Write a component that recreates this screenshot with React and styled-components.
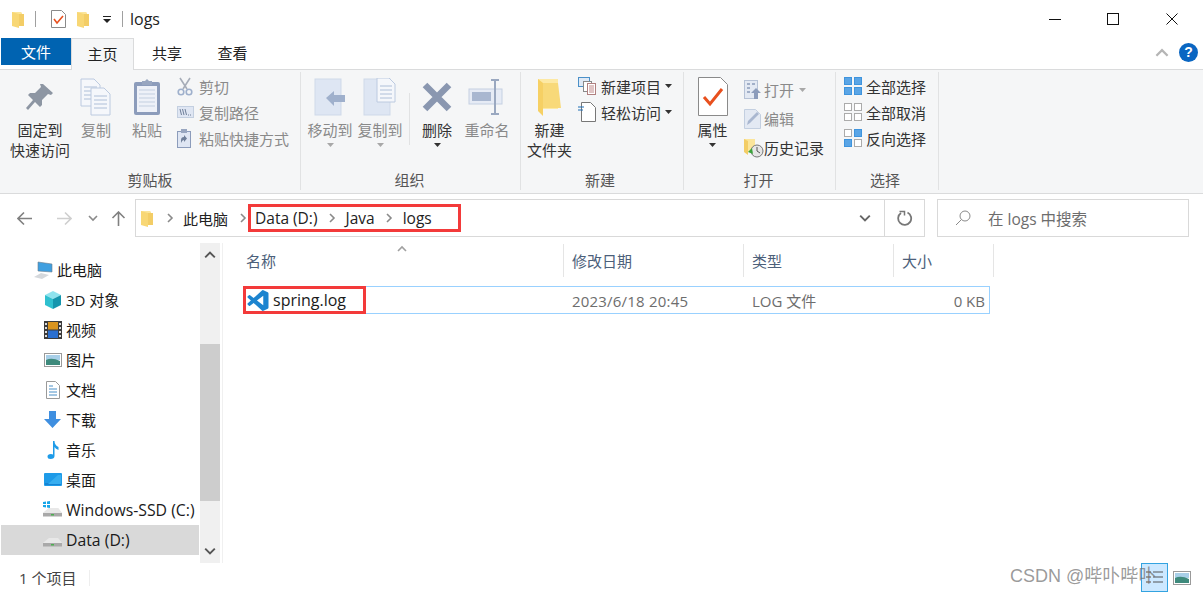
import React from "react";
import styled, { createGlobalStyle } from "styled-components";

const GlobalStyle = createGlobalStyle`
  html, body { margin: 0; padding: 0; background: #fff; }
  * { box-sizing: border-box; }
  body {
    font-family: "Open Sans", "Noto Sans CJK SC", sans-serif;
    font-size: 15px;
    color: #1a1a1a;
  }
`;

/* ---------- icons ---------- */
const Folder = ({ w = 13, h = 17 }) => (
  <svg width={w} height={h} viewBox="0 0 13 17">
    <path d="M0 1h9l1 1v13H0z" fill="#fbe59b" />
    <path d="M0 1l7 2v14l-7-2z" fill="#f8d775" />
    <path d="M7 3h5v12H7z" fill="#f3cd66" />
  </svg>
);
const BigFolder = () => (
  <svg width="26" height="38" viewBox="0 0 26 38">
    <path d="M1 1h20v30H1z" fill="#fde9a4" />
    <path d="M1 1l5 4v33l-5-5z" fill="#f6d064" />
    <path d="M6 5h15l3 25H6z" fill="#f8d979" />
  </svg>
);
const Pin = () => (
  <svg width="28" height="28" viewBox="0 0 28 28">
    <path d="M17 1l10 9-2 2-3-1-6 6 0 5-2 2-5-5-7 8-2-2 7-8-5-5 2-2h5l6-6-1-3z" fill="#8d96a3" />
  </svg>
);
const Sheet = ({ x, y, w = 19, h = 27 }) => (
  <g>
    <path d={`M${x} ${y}h${w - 6}l6 6v${h - 6}h-${w}z`} fill="#f5f7fb" stroke="#bccae0" />
    {[8, 12, 16, 20].map((d) => (
      <path key={d} d={`M${x + 3} ${y + d}h${w - 6}`} stroke="#aebfd8" />
    ))}
  </g>
);
const CopyIcon = () => (
  <svg width="32" height="38" viewBox="0 0 32 38">
    <Sheet x={1} y={1} />
    <Sheet x={11} y={10} />
  </svg>
);
const PasteIcon = () => (
  <svg width="28" height="38" viewBox="0 0 28 38">
    <rect x="1" y="4" width="26" height="33" rx="2" fill="#8c9cbb" />
    <rect x="4" y="8" width="20" height="26" fill="#eef1f8" />
    {[12, 16, 20, 24, 28].map((d) => (
      <path key={d} d={`M6 ${d}h16`} stroke="#c3cfe0" />
    ))}
    <path d="M9 3h3l2-2 2 2h3v4H9z" fill="#98a6c0" />
  </svg>
);
const Cut = () => (
  <svg width="16" height="19" viewBox="0 0 16 19">
    <path d="M3 1l7 11M13 1L6 12" stroke="#a7adb8" strokeWidth="1.6" fill="none" />
    <circle cx="4" cy="15" r="2.8" fill="none" stroke="#9fb0cc" strokeWidth="1.6" />
    <circle cx="12" cy="15" r="2.8" fill="none" stroke="#9fb0cc" strokeWidth="1.6" />
  </svg>
);
const PathIcon = () => (
  <svg width="17" height="12" viewBox="0 0 17 12">
    <rect x=".5" y=".5" width="16" height="11" fill="#dfe6f3" stroke="#c3cfe0" />
    <path d="M3 3l1.5 6M5.5 3L7 9M8 3l1.5 6" stroke="#6f7f99" />
    <path d="M11 9h1M13 9h1" stroke="#6f7f99" />
  </svg>
);
const ShortcutIcon = () => (
  <svg width="14" height="19" viewBox="0 0 14 19">
    <rect x=".5" y="2.5" width="13" height="16" fill="#dfe6f3" stroke="#8c9cbb" />
    <rect x="4" y="0" width="6" height="4" fill="#98a6c0" />
    <path d="M4 14v-3q0-3 3-3V6l3 3.5L7 13v-2q-2 0-3 3z" fill="#6f7f99" />
  </svg>
);
const MoveIcon = () => (
  <svg width="32" height="38" viewBox="0 0 32 38">
    <rect x="1" y="1" width="26" height="36" fill="#dee6f3" stroke="#cfd9e9" />
    <path d="M12 27l8-7v4h11v7H20v4z" fill="#9fb0cc" transform="translate(0 -7)" />
  </svg>
);
const CopyToIcon = () => (
  <svg width="34" height="38" viewBox="0 0 34 38">
    <rect x="1" y="1" width="26" height="36" fill="#dee6f3" stroke="#cfd9e9" />
    <Sheet x={14} y={0} w={18} h={24} />
  </svg>
);
const BigX = () => (
  <svg width="32" height="32" viewBox="0 0 32 32">
    <path d="M4 4l24 24M28 4L4 28" stroke="#8a97b0" strokeWidth="6.5" />
  </svg>
);
const RenameIcon = () => (
  <svg width="38" height="36" viewBox="0 0 38 36">
    <rect x="1" y="10" width="33" height="15" fill="#e6ebf5" stroke="#c5d0e2" />
    <rect x="4" y="13" width="19" height="9" fill="#a9b7d0" />
    <path d="M23 1h8M23 35h8M27 1v34" stroke="#9aa8c0" strokeWidth="2" fill="none" />
  </svg>
);
const NewItemIcon = () => (
  <svg width="19" height="18" viewBox="0 0 19 18">
    <rect x=".5" y=".5" width="11" height="9" fill="#dfe9f5" stroke="#4a90c8" />
    <rect x="5.5" y="4.5" width="8" height="10" fill="#fff" stroke="#8a8a8a" />
    <rect x="9.5" y="6.5" width="8" height="11" fill="#fff" stroke="#b08080" />
    <path d="M11 9h5M11 11h5M11 13h5M11 15h5" stroke="#c08a8a" />
  </svg>
);
const EasyIcon = () => (
  <svg width="18" height="20" viewBox="0 0 18 20">
    <path d="M3.5.5h9l5 5v14h-14z" fill="#fff" stroke="#777" />
    <path d="M0 5h6M0 8h5" stroke="#1f6fb5" strokeWidth="1.2" />
  </svg>
);
const PropsIcon = () => (
  <svg width="30" height="39" viewBox="0 0 30 39">
    <path d="M.5.5h22l7 7v31H.5z" fill="#fff" stroke="#8a8a8a" />
    <path d="M6 20l6 7 12-15" stroke="#e8501e" strokeWidth="3" fill="none" />
  </svg>
);
const OpenIcon = () => (
  <svg width="18" height="20" viewBox="0 0 18 20">
    <rect x=".5" y=".5" width="13" height="18" fill="#e3e9f3" stroke="#b6c2d6" />
    <path d="M3 4h3M8 4h3M3 8h3M3 12h3" stroke="#8c9cbb" strokeWidth="1.5" />
    <path d="M12 8l5 5h-3v6h-4v-6H7z" fill="#8c9cbb" />
  </svg>
);
const EditIcon = () => (
  <svg width="17" height="20" viewBox="0 0 17 20">
    <path d="M.5.5h11l5 5v14H.5z" fill="#e3e9f3" stroke="#c3cfe0" />
    <path d="M3 16l1-4 9-9 2 2-9 9z" fill="#a9b7d0" />
  </svg>
);
const HistoryIcon = () => (
  <svg width="20" height="20" viewBox="0 0 20 20">
    <path d="M0 1h11v13H0z" fill="#fbe59b" />
    <path d="M0 1l4 2v14l-4-3z" fill="#f3cd66" />
    <circle cx="13" cy="13" r="6" fill="#e6e6e6" stroke="#777" />
    <path d="M13 9v4l3 2" stroke="#555" fill="none" />
    <path d="M4 14l4-4 1 6z" fill="#3ca33c" />
  </svg>
);
const SelectGrid = ({ on = [0, 1, 2, 3] }) => (
  <svg width="18" height="18" viewBox="0 0 18 18">
    {[[0, 0], [10, 0], [0, 10], [10, 10]].map(([x, y], i) => (
      <rect
        key={i}
        x={x + 0.5}
        y={y + 0.5}
        width="7"
        height="7"
        fill={on.includes(i) ? "#5aa5e6" : "#fff"}
        stroke={on.includes(i) ? "#3f94dd" : "#ababab"}
      />
    ))}
  </svg>
);
const Caret = ({ light }) => (
  <svg width="7" height="4" viewBox="0 0 7 4">
    <path d="M0 0h7L3.5 4z" fill={light ? "#a8a8a8" : "#333"} />
  </svg>
);
const Chevron = ({ dir = "right", color = "#8a8a8a", size = 10 }) => {
  const d = {
    right: "M3 1l4 4-4 4",
    down: "M1 3l4 4 4-4",
    up: "M1 7l4-4 4 4",
  }[dir];
  return (
    <svg width={size} height={size} viewBox="0 0 10 10">
      <path d={d} fill="none" stroke={color} strokeWidth="1.6" />
    </svg>
  );
};
const Arrow = ({ dir, color }) => {
  const d = {
    left: "M15 7.5H1M7 1.5l-6 6 6 6",
    right: "M0 7.5h14M8 1.5l6 6-6 6",
    up: "M7.5 15V1M1.5 7l6-6 6 6",
  }[dir];
  return (
    <svg width="15" height="15" viewBox="0 0 15 15">
      <path d={d} fill="none" stroke={color} strokeWidth="1.6" />
    </svg>
  );
};
const VsCode = () => (
  <svg width="22" height="21" viewBox="0 0 24 24">
    <path
      fill="#1c84cf"
      d="M23.15 2.587L18.21.21a1.494 1.494 0 0 0-1.705.29l-9.46 8.63-4.12-3.128a.999.999 0 0 0-1.276.057L.327 7.261A1 1 0 0 0 .326 8.74L3.899 12 .326 15.26a1 1 0 0 0 .001 1.479L1.65 17.94a.999.999 0 0 0 1.276.057l4.12-3.128 9.46 8.63a1.492 1.492 0 0 0 1.704.29l4.942-2.377A1.5 1.5 0 0 0 24 20.06V3.939a1.5 1.5 0 0 0-.85-1.352zm-5.146 14.861L10.826 12l7.178-5.448v10.896z"
    />
  </svg>
);

/* sidebar icons */
const PcIcon = () => (
  <svg width="20" height="18" viewBox="0 0 20 18">
    <path d="M5 1l14 2v8L5 10z" fill="#3f9fe0" stroke="#6b7c8c" strokeWidth=".6" />
    <path d="M1 16l7-4 8 2-7 4z" fill="#d5d8dc" />
  </svg>
);
const CubeIcon = () => (
  <svg width="18" height="18" viewBox="0 0 18 18">
    <path d="M9 0l8 4-8 4-8-4z" fill="#8fe3ee" />
    <path d="M1 4l8 4v10l-8-4z" fill="#2fc0cf" />
    <path d="M17 4L9 8v10l8-4z" fill="#1595ad" />
  </svg>
);
const FilmIcon = () => (
  <svg width="18" height="18" viewBox="0 0 18 18">
    <rect width="18" height="18" fill="#3b3b3b" />
    <rect x="4" y="1" width="10" height="7.5" fill="#d9941e" />
    <rect x="4" y="9.5" width="10" height="7.5" fill="#2a6fd0" />
    {[2, 6, 10, 14].map((y) => (
      <g key={y}>
        <rect x="1" y={y} width="2" height="2" fill="#ddd" />
        <rect x="15" y={y} width="2" height="2" fill="#ddd" />
      </g>
    ))}
  </svg>
);
const PictureIcon = () => (
  <svg width="18" height="14" viewBox="0 0 18 14">
    <rect x=".5" y=".5" width="17" height="13" fill="#fff" stroke="#9a9a9a" />
    <rect x="2" y="2" width="14" height="5" fill="#a8cfe8" />
    <path d="M2 7q6-3 14 1v4H2z" fill="#3e8a7c" />
  </svg>
);
const DocIcon = () => (
  <svg width="14" height="18" viewBox="0 0 14 18">
    <path d="M.5.5h9l4 4v13H.5z" fill="#fff" stroke="#9a9a9a" />
    <path d="M3 5h4M3 8h8M3 11h8M3 14h8" stroke="#4a90c8" />
  </svg>
);
const DownloadIcon = () => (
  <svg width="17" height="17" viewBox="0 0 17 17">
    <path d="M5 0h7v8h5l-8.500 9L0 8h5z" fill="#3f8fe0" />
  </svg>
);
const MusicIcon = () => (
  <svg width="12" height="18" viewBox="0 0 12 18">
    <path d="M6 0h1.500q0 4 4 6v3q-3-1-4-3v9q0 3-4 3-3 0-3-2.500T4 13l2 .5z" fill="#1e9be8" />
  </svg>
);
const DesktopIcon = () => (
  <svg width="18" height="13" viewBox="0 0 18 13">
    <rect width="18" height="13" rx="1" fill="#1e9be8" />
    <path d="M1 11h16" stroke="#0f6fc0" />
    <path d="M4 11L14 2h3v9z" fill="#37aef0" />
  </svg>
);
const Drive = ({ win }) => (
  <svg width="19" height="17" viewBox="0 0 19 17">
    <path d="M0 12l6-5h9l4 5v3H0z" fill="#dcdcdc" />
    <path d="M0 12h19v3.500H0z" fill="#a9a9a9" />
    <path d="M0 12l6-5h9l4 5z" fill="#e8e8e8" />
    <rect x="8" y="13" width="3" height="1.500" fill="#4caf50" />
    {win && <path d="M0 1l3-.5V3H0zM4 .4L7 0v3H4zM0 4h3v2.500L0 6zM4 4h3v3l-3-.5z" fill="#16a5e8" />}
  </svg>
);

/* ---------- layout ---------- */
const Window = styled.div`
  width: 1203px;
  height: 594px;
  background: #fff;
  overflow: hidden;
  display: flex;
  flex-direction: column;
  position: relative;
`;

const TitleBar = styled.div`
  height: 38px;
  display: flex;
  align-items: center;
  padding-left: 12px;
`;
const TitleDivider = styled.span`
  width: 1px;
  height: 16px;
  background: #a0a0a0;
  margin: 0 ${(p) => p.$right}px 0 ${(p) => p.$left}px;
`;
const TitleIcon = styled.span`
  display: flex;
  margin-left: ${(p) => p.$left || 0}px;
`;
const TitleText = styled.span`
  font-size: 16px;
  color: #222;
`;
const WindowControls = styled.div`
  margin-left: auto;
  display: flex;
  padding-right: 2px;
`;
const WinButton = styled.span`
  width: 58.5px;
  height: 38px;
  display: flex;
  align-items: center;
  justify-content: center;
`;

const TabStrip = styled.div`
  height: 32px;
  display: flex;
  padding-left: 1px;
  border-bottom: 1px solid #dadbdc;
  align-items: flex-start;
`;
const FileTab = styled.div`
  width: 70px;
  height: 27px;
  background: #0063b1;
  color: #fff;
  display: flex;
  align-items: center;
  justify-content: center;
`;
const Tab = styled.div`
  width: ${(p) => p.$w}px;
  height: ${(p) => (p.$active ? 32 : 31)}px;
  padding-bottom: 3px;
  display: flex;
  align-items: center;
  justify-content: center;
  color: #222;
  background: ${(p) => (p.$active ? "#f5f6f7" : "transparent")};
  border: ${(p) => (p.$active ? "1px solid #dadbdc" : "0")};
  border-bottom: 0;
  position: relative;
`;
const StripRight = styled.div`
  margin-left: auto;
  display: flex;
  align-items: center;
  gap: 10px;
  padding: 5px 5px 0 0;
`;
const HelpBadge = styled.span`
  width: 19px;
  height: 19px;
  border-radius: 50%;
  background: #0a66c2;
  color: #fff;
  font: bold 14px/19px "Liberation Sans", sans-serif;
  text-align: center;
`;

const Ribbon = styled.div`
  height: 124px;
  display: flex;
  background: #f5f6f7;
  border-bottom: 1px solid #dadbdc;
`;
const Group = styled.div`
  width: ${(p) => p.$w}px;
  margin: 2px 0 3px;
  border-right: 1px solid #e1e2e3;
  display: flex;
  flex-direction: column;
`;
const GroupBody = styled.div`
  flex: 1;
  display: flex;
  padding-left: ${(p) => p.$pad || 0}px;
  padding-top: 1px;
`;
const GroupLabel = styled.div`
  height: 20px;
  line-height: 20px;
  text-align: center;
  color: #555;
  padding-right: ${(p) => p.$shift || 0}px;
`;
const LargeButton = styled.div`
  width: ${(p) => p.$w}px;
  display: flex;
  flex-direction: column;
  align-items: center;
  text-align: center;
  line-height: 20px;
  color: ${(p) => (p.$muted ? "#8a8a8a" : "#333")};
`;
const IconSlot = styled.div`
  height: 47px;
  display: flex;
  align-items: center;
  justify-content: center;
`;
const CaretSlot = styled.div`
  height: 10px;
  display: flex;
  align-items: center;
  margin-left: ${(p) => p.$left || 0}px;
`;
const VerticalRule = styled.div`
  width: 1px;
  height: 52px;
  margin: 20px 0 0 4px;
  background: #e1e2e3;
`;
const SmallStack = styled.div`
  display: flex;
  flex-direction: column;
  margin-left: ${(p) => p.$left || 0}px;
  padding-top: ${(p) => p.$top || 0}px;
`;
const SmallItem = styled.div`
  height: ${(p) => p.$h || 26}px;
  display: flex;
  align-items: center;
  color: ${(p) => (p.$muted ? "#8a8a8a" : "#333")};
  white-space: nowrap;
`;
const SmallIcon = styled.span`
  width: ${(p) => p.$w || 22}px;
  display: flex;
  justify-content: flex-start;
`;

const AddressRow = styled.div`
  height: 49px;
  display: flex;
  padding-top: 5px;
`;
const NavButton = styled.span`
  width: ${(p) => p.$w}px;
  height: 38px;
  display: flex;
  align-items: center;
  justify-content: center;
`;
const Field = styled.div`
  width: ${(p) => p.$w}px;
  height: 38px;
  border: 1px solid #d9d9d9;
  border-left-width: ${(p) => (p.$joined ? 0 : 1)}px;
  display: flex;
  align-items: center;
  margin-left: ${(p) => p.$left || 0}px;
`;
const Crumb = styled.span`
  color: #222;
  white-space: nowrap;
  font-size: ${(p) => (p.$cjk ? 15 : 15.5)}px;
`;
const CrumbSep = styled.span`
  display: flex;
  margin: 0 ${(p) => p.$right ?? 9}px 0 ${(p) => p.$left ?? 9}px;
`;
const Highlight = styled.div`
  border: 3px solid #f33a3a;
  height: 28px;
  display: flex;
  align-items: center;
  flex: none;
`;
const PathHighlight = styled(Highlight)`
  width: 213px;
  padding-left: 4px;
`;
const FileHighlight = styled(Highlight)`
  width: 123px;
  margin: -1px 0 0 -2px;
  padding-left: 1px;
  gap: 4px;
`;
const FieldEnd = styled.span`
  margin-left: auto;
  margin-right: 13px;
  display: flex;
`;
const SearchHint = styled.span`
  color: #6d6d6d;
  margin-left: 17px;
  font-size: 15.5px;
`;
const SearchIcon = styled.svg`
  margin-left: 17px;
`;

const Main = styled.div`
  height: 320px;
  display: flex;
`;
const Sidebar = styled.div`
  width: 200px;
  padding-top: 12px;
  overflow: hidden;
`;
const NavRow = styled.div`
  height: 30px;
  margin-left: 1px;
  width: 198px;
  display: flex;
  align-items: center;
  background: ${(p) => (p.$selected ? "#d9d9d9" : "transparent")};
  padding-left: ${(p) => p.$indent}px;
  padding-bottom: 1px;
  white-space: nowrap;
  color: #1a1a1a;
  font-size: ${(p) => (p.$latin ? 15.8 : 15)}px;
`;
const NavIcon = styled.span`
  width: ${(p) => p.$w || 24}px;
  display: flex;
  justify-content: center;
  flex: none;
`;
const ScrollBar = styled.div`
  width: 20px;
  background: #f0f0f0;
  display: flex;
  flex-direction: column;
`;
const ScrollEnd = styled.div`
  height: ${(p) => p.$h}px;
  display: flex;
  justify-content: center;
  align-items: ${(p) => p.$align};
  padding: 6px 0;
`;
const ScrollThumb = styled.div`
  height: 157px;
  background: #cdcdcd;
`;
const Content = styled.div`
  flex: 1;
  margin-left: 2px;
  border-left: 1px solid #f0f0f0;
  position: relative;
`;
const HeaderRow = styled.div`
  height: 33px;
  margin-top: 1px;
  display: flex;
  padding-left: 16px;
`;
const HeaderCell = styled.div`
  width: ${(p) => p.$w}px;
  padding-left: ${(p) => p.$pad || 8}px;
  border-right: 1px solid #e5e5e5;
  display: flex;
  align-items: center;
  color: #4c607a;
`;
const SortCaret = styled.span`
  position: absolute;
  left: 174px;
  top: 1px;
  display: flex;
`;
const FileRow = styled.div`
  margin: 9px 0 0 21px;
  width: 746px;
  height: 28px;
  border: 1px solid #99d1ff;
  display: grid;
  grid-template-columns: 319px 180px 150px 91px;
  align-items: center;
  color: #6d6d6d;
`;
const FileName = styled.span`
  color: #1a1a1a;
  font-size: 16px;
`;
const Cell = styled.span`
  padding-left: 8px;
  text-align: ${(p) => p.$align || "left"};
  letter-spacing: ${(p) => p.$track || 0}px;
`;

const StatusBar = styled.div`
  flex: 1;
  display: flex;
  align-items: center;
  padding: 0 0 2px 19px;
  color: #444;
`;
const StatusDivider = styled.span`
  width: 1px;
  height: 16px;
  background: #eee;
  margin-left: 13px;
`;
const ViewToggles = styled.div`
  margin-left: auto;
  display: flex;
  align-items: center;
  gap: 5px;
  margin-right: 12px;
`;
const ViewActive = styled.span`
  width: 27px;
  height: 29px;
  background: #cce8ff;
  border: 1px solid #33a3e0;
  display: flex;
  align-items: center;
  justify-content: center;
`;
const Watermark = styled.div`
  position: absolute;
  left: 1010px;
  top: 561px;
  font: 18px "Liberation Sans", "Noto Sans CJK SC", sans-serif;
  color: rgba(110, 110, 110, 0.7);
  white-space: nowrap;
`;

const navItems = [
  { label: "3D 对象", icon: <CubeIcon /> },
  { label: "视频", icon: <FilmIcon /> },
  { label: "图片", icon: <PictureIcon /> },
  { label: "文档", icon: <DocIcon /> },
  { label: "下载", icon: <DownloadIcon /> },
  { label: "音乐", icon: <MusicIcon /> },
  { label: "桌面", icon: <DesktopIcon /> },
  { label: "Windows-SSD (C:)", icon: <Drive win />, latin: true },
  { label: "Data (D:)", icon: <Drive />, latin: true, selected: true },
];

export default function App() {
  return (
    <Window>
      <GlobalStyle />
      <TitleBar>
        <Folder />
        <TitleDivider $left={10} $right={10} />
        <TitleIcon $left={5}>
          <svg width="15" height="18" viewBox="0 0 15 18">
            <path d="M.5.5h10l4 4v13H.5z" fill="#fff" stroke="#8a8a8a" />
            <path d="M3 9l3 4 6-7" stroke="#e8501e" strokeWidth="1.600" fill="none" />
          </svg>
        </TitleIcon>
        <TitleIcon $left={11}>
          <Folder />
        </TitleIcon>
        <TitleIcon $left={13}>
          <svg width="8" height="7" viewBox="0 0 8 7">
            <path d="M0 0h8v1H0zM0 3h8L4 7z" fill="#222" />
          </svg>
        </TitleIcon>
        <TitleDivider $left={11} $right={7} />
        <TitleText>logs</TitleText>
        <WindowControls>
          <WinButton>
            <svg width="12" height="12" viewBox="0 0 12 12">
              <path d="M0 6.500h12" stroke="#111" />
            </svg>
          </WinButton>
          <WinButton>
            <svg width="12" height="12" viewBox="0 0 12 12">
              <rect x=".5" y=".5" width="11" height="11" fill="none" stroke="#111" />
            </svg>
          </WinButton>
          <WinButton>
            <svg width="12" height="12" viewBox="0 0 12 12">
              <path d="M.5.5l11 11M11.500.5l-11 11" stroke="#111" />
            </svg>
          </WinButton>
        </WindowControls>
      </TitleBar>

      <TabStrip>
        <FileTab>文件</FileTab>
        <Tab $w={63} $active>
          主页
        </Tab>
        <Tab $w={66}>共享</Tab>
        <Tab $w={65}>查看</Tab>
        <StripRight>
          <Chevron dir="up" color="#b5b5b5" size={14} />
          <HelpBadge>?</HelpBadge>
        </StripRight>
      </TabStrip>

      <Ribbon>
        <Group $w={301}>
          <GroupBody $pad={10}>
            <LargeButton $w={60}>
              <IconSlot>
                <Pin />
              </IconSlot>
              固定到
              <br />
              快速访问
            </LargeButton>
            <LargeButton $w={52} $muted>
              <IconSlot>
                <CopyIcon />
              </IconSlot>
              复制
            </LargeButton>
            <LargeButton $w={50} $muted>
              <IconSlot>
                <PasteIcon />
              </IconSlot>
              粘贴
            </LargeButton>
            <SmallStack $left={5}>
              <SmallItem $muted>
                <SmallIcon>
                  <Cut />
                </SmallIcon>
                剪切
              </SmallItem>
              <SmallItem $muted>
                <SmallIcon>
                  <PathIcon />
                </SmallIcon>
                复制路径
              </SmallItem>
              <SmallItem $muted>
                <SmallIcon>
                  <ShortcutIcon />
                </SmallIcon>
                粘贴快捷方式
              </SmallItem>
            </SmallStack>
          </GroupBody>
          <GroupLabel>剪贴板</GroupLabel>
        </Group>

        <Group $w={220}>
          <GroupBody $pad={4}>
            <LargeButton $w={50} $muted>
              <IconSlot>
                <MoveIcon />
              </IconSlot>
              移动到
              <CaretSlot>
                <Caret light />
              </CaretSlot>
            </LargeButton>
            <LargeButton $w={50} $muted>
              <IconSlot>
                <CopyToIcon />
              </IconSlot>
              复制到
              <CaretSlot>
                <Caret light />
              </CaretSlot>
            </LargeButton>
            <VerticalRule />
            <LargeButton $w={54}>
              <IconSlot>
                <BigX />
              </IconSlot>
              删除
              <CaretSlot>
                <Caret />
              </CaretSlot>
            </LargeButton>
            <LargeButton $w={46} $muted>
              <IconSlot>
                <RenameIcon />
              </IconSlot>
              重命名
            </LargeButton>
          </GroupBody>
          <GroupLabel $shift={2}>组织</GroupLabel>
        </Group>

        <Group $w={163}>
          <GroupBody>
            <LargeButton $w={57}>
              <IconSlot>
                <BigFolder />
              </IconSlot>
              新建
              <br />
              文件夹
            </LargeButton>
            <SmallStack>
              <SmallItem>
                <SmallIcon $w={23}>
                  <NewItemIcon />
                </SmallIcon>
                新建项目
                <CaretSlot $left={4}>
                  <Caret />
                </CaretSlot>
              </SmallItem>
              <SmallItem>
                <SmallIcon $w={23}>
                  <EasyIcon />
                </SmallIcon>
                轻松访问
                <CaretSlot $left={4}>
                  <Caret />
                </CaretSlot>
              </SmallItem>
            </SmallStack>
          </GroupBody>
          <GroupLabel $shift={4}>新建</GroupLabel>
        </Group>

        <Group $w={152}>
          <GroupBody>
            <LargeButton $w={57}>
              <IconSlot>
                <PropsIcon />
              </IconSlot>
              属性
              <CaretSlot>
                <Caret />
              </CaretSlot>
            </LargeButton>
            <SmallStack $left={3} $top={2}>
              <SmallItem $h={29} $muted>
                <SmallIcon $w={20}>
                  <OpenIcon />
                </SmallIcon>
                打开
                <CaretSlot $left={5}>
                  <Caret light />
                </CaretSlot>
              </SmallItem>
              <SmallItem $h={29} $muted>
                <SmallIcon $w={20}>
                  <EditIcon />
                </SmallIcon>
                编辑
              </SmallItem>
              <SmallItem $h={29}>
                <SmallIcon $w={20}>
                  <HistoryIcon />
                </SmallIcon>
                历史记录
              </SmallItem>
            </SmallStack>
          </GroupBody>
          <GroupLabel $shift={2}>打开</GroupLabel>
        </Group>

        <Group $w={103}>
          <GroupBody $pad={8}>
            <SmallStack>
              <SmallItem>
                <SmallIcon>
                  <SelectGrid />
                </SmallIcon>
                全部选择
              </SmallItem>
              <SmallItem>
                <SmallIcon>
                  <SelectGrid on={[]} />
                </SmallIcon>
                全部取消
              </SmallItem>
              <SmallItem>
                <SmallIcon>
                  <SelectGrid on={[1, 2]} />
                </SmallIcon>
                反向选择
              </SmallItem>
            </SmallStack>
          </GroupBody>
          <GroupLabel $shift={4}>选择</GroupLabel>
        </Group>
      </Ribbon>

      <AddressRow>
        <NavButton $w={49}>
          <Arrow dir="left" color="#808080" />
        </NavButton>
        <NavButton $w={30}>
          <Arrow dir="right" color="#cfcfcf" />
        </NavButton>
        <NavButton $w={28}>
          <Chevron dir="down" />
        </NavButton>
        <NavButton $w={22}>
          <Arrow dir="up" color="#808080" />
        </NavButton>
        <Field $w={750} $left={6}>
          <TitleIcon $left={5}>
            <Folder />
          </TitleIcon>
          <CrumbSep $left={11} $right={8}>
            <Chevron />
          </CrumbSep>
          <Crumb $cjk>此电脑</Crumb>
          <CrumbSep $left={10} $right={0}>
            <Chevron />
          </CrumbSep>
          <PathHighlight>
            <Crumb>Data (D:)</Crumb>
            <CrumbSep>
              <Chevron />
            </CrumbSep>
            <Crumb>Java</Crumb>
            <CrumbSep>
              <Chevron />
            </CrumbSep>
            <Crumb>logs</Crumb>
          </PathHighlight>
          <FieldEnd>
            <Chevron dir="down" color="#666" size={12} />
          </FieldEnd>
        </Field>
        <Field $w={40} $joined>
          <NavButton $w={40}>
            <svg width="16" height="16" viewBox="0 0 16 16">
              <path d="M10.500 2.500A6.500 6.500 0 1 1 4 3" fill="none" stroke="#777" strokeWidth="1.800" />
              <path d="M2.500 1.500h5v4" fill="none" stroke="#777" strokeWidth="1.500" />
            </svg>
          </NavButton>
        </Field>
        <Field $w={252} $left={12}>
          <SearchIcon width="16" height="16" viewBox="0 0 16 16">
            <circle cx="10" cy="6" r="5" fill="none" stroke="#8a8a8a" />
            <path d="M6.500 9.500L1 15" stroke="#8a8a8a" />
          </SearchIcon>
          <SearchHint>在 logs 中搜索</SearchHint>
        </Field>
      </AddressRow>

      <Main>
        <Sidebar>
          <NavRow $indent={28}>
            <NavIcon $w={28}>
              <PcIcon />
            </NavIcon>
            此电脑
          </NavRow>
          {navItems.map((item) => (
            <NavRow key={item.label} $indent={38} $selected={item.selected} $latin={item.latin}>
              <NavIcon $w={27}>{item.icon}</NavIcon>
              {item.label}
            </NavRow>
          ))}
        </Sidebar>
        <ScrollBar>
          <ScrollEnd $h={101} $align="flex-start">
            <Chevron dir="up" color="#555" size={12} />
          </ScrollEnd>
          <ScrollThumb />
          <ScrollEnd $h={62} $align="flex-end">
            <Chevron dir="down" color="#555" size={12} />
          </ScrollEnd>
        </ScrollBar>
        <Content>
          <SortCaret>
            <Chevron dir="up" color="#a0a0a0" size={10} />
          </SortCaret>
          <HeaderRow>
            <HeaderCell $w={325} $pad={7}>
              名称
            </HeaderCell>
            <HeaderCell $w={180}>修改日期</HeaderCell>
            <HeaderCell $w={150}>类型</HeaderCell>
            <HeaderCell $w={100}>大小</HeaderCell>
          </HeaderRow>
          <FileRow>
            <div>
              <FileHighlight>
                <VsCode />
                <FileName>spring.log</FileName>
              </FileHighlight>
            </div>
            <Cell $track={0.2}>2023/6/18 20:45</Cell>
            <Cell>LOG 文件</Cell>
            <Cell $align="right">0 KB</Cell>
          </FileRow>
        </Content>
      </Main>

      <StatusBar>
        1 个项目
        <StatusDivider />
        <ViewToggles>
          <ViewActive>
            <svg width="17" height="15" viewBox="0 0 17 15">
              <path d="M0 2h5M0 7h5M0 12h5" stroke="#999" strokeWidth="2" />
              <path d="M7 2h10M7 7h10M7 12h10" stroke="#555" />
            </svg>
          </ViewActive>
          <PictureIcon />
        </ViewToggles>
      </StatusBar>
      <Watermark>CSDN @哔卟哔卟</Watermark>
    </Window>
  );
}
